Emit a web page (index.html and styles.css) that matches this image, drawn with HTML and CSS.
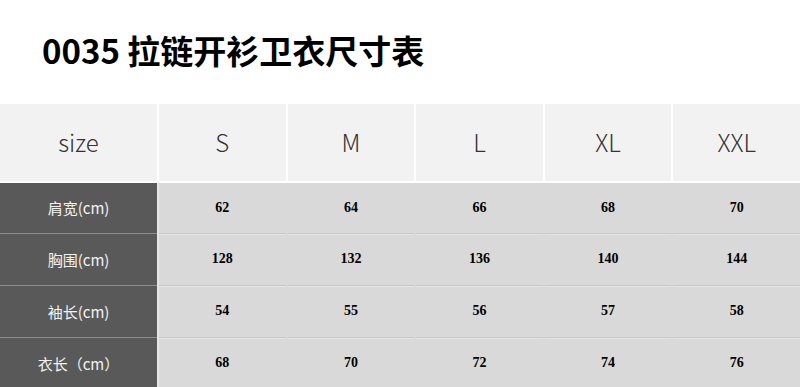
FILE: index.html
```html
<!DOCTYPE html>
<html lang="zh-CN">
<head>
<meta charset="utf-8">
<title>0035 拉链开衫卫衣尺寸表</title>
<link rel="stylesheet" href="styles.css">
</head>
<body>
<h1 class="title">0035 拉链开衫卫衣尺寸表</h1>
<div class="table">
  <div class="row head">
    <div class="cell">size</div>
    <div class="cell">S</div>
    <div class="cell">M</div>
    <div class="cell">L</div>
    <div class="cell">XL</div>
    <div class="cell">XXL</div>
  </div>
  <div class="row body">
    <div class="label">肩宽(cm)</div>
    <div class="num">62</div><div class="num">64</div><div class="num">66</div><div class="num">68</div><div class="num">70</div>
  </div>
  <div class="row body">
    <div class="label">胸围(cm)</div>
    <div class="num">128</div><div class="num">132</div><div class="num">136</div><div class="num">140</div><div class="num">144</div>
  </div>
  <div class="row body">
    <div class="label">袖长(cm)</div>
    <div class="num">54</div><div class="num">55</div><div class="num">56</div><div class="num">57</div><div class="num">58</div>
  </div>
  <div class="row body">
    <div class="label">衣长（cm）</div>
    <div class="num">68</div><div class="num">70</div><div class="num">72</div><div class="num">74</div><div class="num">76</div>
  </div>
</div>
</body>
</html>
```
FILE: styles.css
```css
html, body {
  margin: 0;
  padding: 0;
  background: #ffffff;
}
body {
  width: 800px;
  overflow: hidden;
  font-family: "Noto Sans CJK SC", "Noto Sans", sans-serif;
}
.title {
  margin: 0;
  height: 104px;
  box-sizing: border-box;
  padding: 28px 0 0 42px;
  font-size: 33px;
  line-height: 44px;
  font-weight: 700;
  color: #000;
  letter-spacing: 0;
}
.table {
  display: flex;
  flex-direction: column;
}
.row {
  display: grid;
  grid-template-columns: 157px repeat(5, 1fr);
  column-gap: 2px;
}
.head {
  height: 77px;
  padding-left: 1px;
  margin-left: -1px;
  background: #ffffff;
  border-bottom: 2px solid #ffffff;
}
.head .cell {
  background: #f2f2f2;
  display: flex;
  align-items: center;
  justify-content: center;
  font-family: "Noto Sans CJK SC", "Noto Sans", sans-serif;
  font-weight: 300;
  font-size: 24px;
  color: #333333;
  padding-bottom: 2px;
}
.body {
  height: 52px;
  background: #d9d9d9;
  column-gap: 2px;
}
.body .label {
  background: #595959;
  color: #f2f2f2;
  font-size: 15px;
  display: flex;
  align-items: center;
  justify-content: center;
  border-top: 1px solid #8c8c8c;
  box-shadow: 2px 0 0 #e6e6e6;
  padding-bottom: 1px;
}
.head + .body .label {
  border-top: 0;
}
.body .num {
  display: flex;
  align-items: center;
  justify-content: center;
  font-family: "Liberation Serif", serif;
  font-weight: 700;
  font-size: 14px;
  color: #000;
  border-top: 1px solid #c9c9c9;
  box-shadow: inset 0 1px 0 #e4e4e4;
  padding-bottom: 1px;
}
.head + .body .num {
  border-top: 0;
  box-shadow: none;
}
.head + .body {
  height: 50px;
}
```
